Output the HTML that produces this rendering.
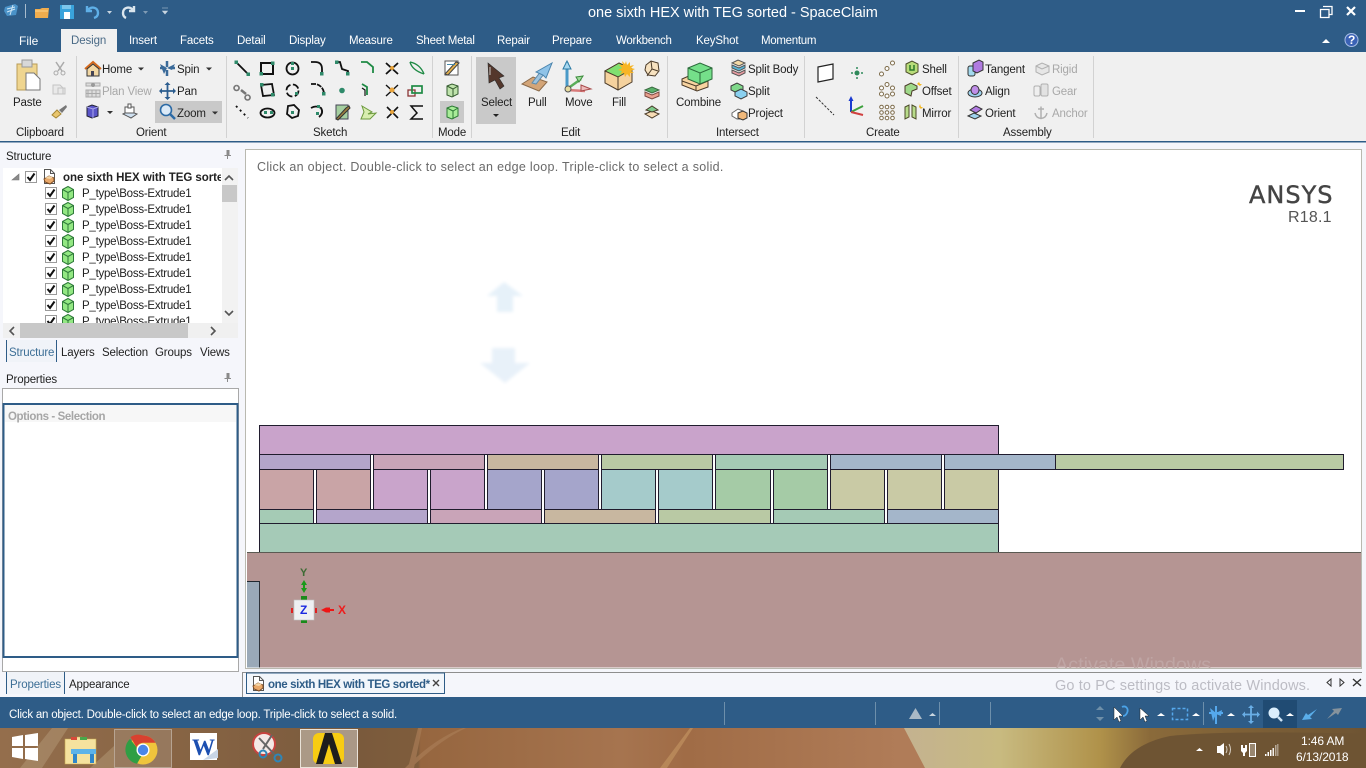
<!DOCTYPE html>
<html lang="en"><head><meta charset="utf-8"><title>one sixth HEX with TEG sorted - SpaceClaim</title>
<style>
html,body{margin:0;padding:0;width:1366px;height:768px;overflow:hidden;background:#f5f6fb}
body{position:relative;font-family:"Liberation Sans",sans-serif;font-size:11.5px;letter-spacing:-.15px;color:#222}
svg.g{position:absolute;left:0;top:0}
.t{position:absolute;white-space:nowrap;line-height:14px;height:14px}
.w{color:#fff}.d{color:#a8a8a8}
.b{font-weight:bold;letter-spacing:-.3px}
.p{letter-spacing:-.25px}
</style></head><body>
<svg class="g" width="1366" height="768" viewBox="0 0 1366 768" xmlns="http://www.w3.org/2000/svg">
<defs>
<linearGradient id="wall" x1="0" x2="1366" y1="0" y2="0" gradientUnits="userSpaceOnUse">
<stop offset="0" stop-color="#946e4c"/><stop offset=".263" stop-color="#7a5a3c"/><stop offset=".306" stop-color="#7f5d3c"/><stop offset=".308" stop-color="#96663f"/><stop offset=".455" stop-color="#a6744f"/><stop offset=".503" stop-color="#a06c46"/><stop offset=".659" stop-color="#b07c58"/><stop offset=".662" stop-color="#c4b290"/><stop offset=".732" stop-color="#c8ba80"/><stop offset=".805" stop-color="#b0924a"/><stop offset=".842" stop-color="#8a6a3a"/><stop offset="1" stop-color="#6e5433"/>
</linearGradient>
<filter id="bl"><feGaussianBlur stdDeviation="1.6"/></filter>
<g id="cb"><rect x=".5" y=".5" width="11" height="11" fill="#fff" stroke="#9a9a9a"/><path d="M2.500 6l2.500 3 4.500-6.500" fill="none" stroke="#111" stroke-width="2"/></g>
<g id="cu"><path d="M1.500 3.500l5.500-3 5.500 3v8l-5.500 3-5.500-3z" fill="#93e883" stroke="#2f7a3a"/><path d="M1.500 3.500l5.500 3 5.500-3M7 6.500v8" fill="none" stroke="#2f7a3a"/></g>
<g id="doc"><path d="M2.500 .5h6l4 4v10h-10z" fill="#fff" stroke="#555"/><path d="M8.500 .5v4h4" fill="none" stroke="#555"/><path d="M2 10l5-3 5 2v3l-4 3-5-2z" fill="#e9a96b" stroke="#7a4a22"/><path d="M3 9l4-2 4 1-3 2z" fill="#f5d7a8"/></g>
</defs>

<!-- top chrome -->
<rect width="1366" height="52" fill="#2e5c87"/>
<rect x="61" y="29" width="56" height="24" fill="#f0f0f0"/>
<rect y="52" width="1366" height="90" fill="#f0f0f0"/>
<rect y="141" width="1366" height="1.5" fill="#2e5c87"/>

<!-- QAT -->
<path d="M5 7l10-3 3 2-2 9-9 1-3-5z" fill="#4a92c8"/><path d="M7 9l8-2M7 12l8-3M10 15l3-10" stroke="#cfe6f5" fill="none"/>
<rect x="25" y="4" width="1" height="14" fill="#a8bccd"/>
<path d="M35 9h5l2-1h7l-1 10H35z" fill="#f0ad4e"/><path d="M35 11h13" stroke="#ffd58c"/>
<rect x="60" y="5" width="14" height="14" fill="#39a3dc"/><rect x="64" y="12" width="6" height="7" fill="#fff"/><rect x="62" y="5" width="9" height="4" fill="#7cc6ec"/>
<path d="M87 6v5h5M88 10c3-4 10-3 10 3 0 2-1 4-4 5" fill="none" stroke="#5fb0e8" stroke-width="2.400"/>
<path d="M107 11h5l-2.500 3z" fill="#c8d5e0"/>
<path d="M134 6v5h-5M133 10c-3-4-10-3-10 3 0 2 1 4 3 5" fill="none" stroke="#dbe6ee" stroke-width="2.400"/>
<path d="M143 11h5l-2.500 3z" fill="#7f9bb4"/>
<path d="M162 8h6M162.500 11h5l-2.500 3z" fill="#c8d5e0" stroke="#c8d5e0" stroke-width=".6"/>

<!-- win controls -->
<rect x="1295" y="10" width="10" height="2" fill="#fff"/>
<path d="M1323 6.500h9v8h-3M1320.500 9.500h8.500v8h-8.500z" fill="none" stroke="#fff" stroke-width="1.300"/>
<path d="M1347 7l8 8M1355 7l-8 8" stroke="#fff" stroke-width="2.200"/>
<path d="M1322 43l4-4 4 4z" fill="#fff"/>
<circle cx="1351.500" cy="40" r="6.500" fill="#3b62b5" stroke="#a9bfe6"/>

<!-- ribbon separators -->
<g fill="#d2d2d2"><rect x="76" y="56" width="1" height="82"/><rect x="226" y="56" width="1" height="82"/><rect x="432" y="56" width="1" height="82"/><rect x="471" y="56" width="1" height="82"/><rect x="667" y="56" width="1" height="82"/><rect x="804" y="56" width="1" height="82"/><rect x="958" y="56" width="1" height="82"/><rect x="1093" y="56" width="1" height="82"/></g>

<!-- clipboard -->
<path d="M17 64h20v26H17z" fill="#efd58f" stroke="#b89b57"/><rect x="22" y="60" width="10" height="7" fill="#d8d8d8" stroke="#999"/>
<path d="M26 73h8l6 6v11H26z" fill="#fff" stroke="#777"/>
<path d="M56 62l6 9M64 62l-6 9" stroke="#aaa" stroke-width="1.500" fill="none"/><circle cx="56" cy="73" r="2" fill="none" stroke="#aaa"/><circle cx="63" cy="73" r="2" fill="none" stroke="#aaa"/>
<path d="M53 85h7l3 3v6H53zM58 88h7v6h-7z" fill="#e9e9e9" stroke="#c4c4c4"/>
<path d="M52 115l5-5 4 4-5 4z" fill="#e9c66e" stroke="#a58634"/><path d="M59 110l7-5 1 2-5 6z" fill="#777"/>

<!-- orient -->
<rect x="155" y="101" width="67" height="22" fill="#c9c9c9"/>
<path d="M85 69l8-7 8 7" fill="none" stroke="#d46a1e" stroke-width="2"/><path d="M87 69v7h12v-7l-6-5z" fill="#f1d7a4" stroke="#333"/><rect x="91" y="71" width="3" height="5" fill="#445"/>
<path d="M138 67.500h6l-3 3z M206 67.500h6l-3 3z M107 111h6l-3 3z M212 111.500h6l-3 3z" fill="#333"/>
<path d="M167 61v6M167 76v-6M160 68h5M175 68h-5" stroke="#3a6a99" stroke-width="2.500"/><path d="M160 64l7 4 8-4-3 6-5-2-3 6z" fill="#3a6a99"/>
<path d="M86 83h14v3H86zM86 90h14v7H86z" fill="#ddd" stroke="#aaa"/><path d="M88 90v7M92 90v7M96 90v7M86 93.500h14" stroke="#aaa"/><circle cx="93" cy="85" r="2" fill="#999"/>
<path d="M167.500 83v16M160 91h15" stroke="#2c5d8f" stroke-width="1.800"/><path d="M167.500 82l-3 3h6zM167.500 100l-3-3h6zM159 91l3-3v6zM176 91l-3-3v6z" fill="#2c5d8f"/>
<path d="M87 107l5-2 6 2v9l-6 2-5-2z" fill="#5a55c8" stroke="#223"/><path d="M87 107l6 2 5-2M93 109v9" stroke="#a9a6ec" fill="none"/>
<path d="M123 114l6-3 8 3-6 4z" fill="#cfe0f0" stroke="#555"/><path d="M125 107h9v6h-9z" fill="#fff" stroke="#555"/><path d="M128 104h3v4h-3z" fill="#fff" stroke="#555"/>
<circle cx="166" cy="110" r="5.500" fill="#dceaf7" stroke="#2c6aa5" stroke-width="1.600"/><path d="M170 114l5 5" stroke="#2c6aa5" stroke-width="2.500"/>

<!-- sketch -->
<g fill="none" stroke="#111" stroke-width="1.800">
<path d="M236 62l12 12"/><path d="M261 63h12v11h-12z" stroke-width="2"/><circle cx="292.500" cy="68.500" r="6"/><path d="M311 62h4q7 0 7 7v5"/><path d="M336 62h4l2 7 6 2v3"/><path d="M361 62h6l6 5v6" stroke="#1f8a45"/>
<path d="M386 63l12 11M398 63l-12 11"/><path d="M410 62q10 2 14 12M410 62q2 8 14 12" stroke="#1f8a45" stroke-width="1.400"/>
<path d="M241 90l5 4" stroke="#777" stroke-width="2.500"/><path d="M261 85l11-1 2 11-11 1z"/><circle cx="292.500" cy="90.500" r="6" stroke-dasharray="7 2.500"/><path d="M311 84h5q7 2 8 9" stroke-dasharray="5 1"/>
<path d="M362 84l5 3v8" stroke="#1f8a45"/><path d="M362 88l3 2v6" stroke-width="1.200"/>
<path d="M386 85l12 11M398 85l-12 11" stroke-width="1.400"/><rect x="408" y="90" width="7" height="6" stroke="#8a3535" stroke-width="1.300"/><rect x="412" y="86" width="10" height="7" stroke="#1f8a45" stroke-width="1.700"/>
<path d="M236 106l12 12" stroke-dasharray="2 3.500"/><ellipse cx="267.500" cy="113" rx="7" ry="4.500"/><path d="M288 106l6-1 5 5-1 6-6 2-5-4z"/><path d="M311 108q5-3 10 0 3 5-2 9"/>
<path d="M387 107l11 11M398 107l-11 11" stroke-width="1.600"/><path d="M423 106h-12l6 7-6 6h12" stroke-width="1.500"/>
</g>
<g fill="#2f8a6a"><rect x="234.500" y="60.500" width="3.500" height="3.500"/><rect x="246.500" y="72.500" width="3.500" height="3.500"/><rect x="271" y="61.500" width="3.500" height="3.500"/><rect x="259.500" y="72" width="3.500" height="3.500"/><rect x="291" y="67" width="3" height="3"/><rect x="291" y="62" width="3" height="3"/><rect x="320" y="72" width="3.500" height="3.500"/><rect x="335" y="60.500" width="3.500" height="3.500"/><rect x="346" y="72" width="3.500" height="3.500"/><rect x="260" y="83" width="3.500" height="3.500"/><rect x="271" y="93" width="3.500" height="3.500"/><rect x="295" y="92" width="3" height="3"/><rect x="322" y="92" width="3.500" height="3.500"/><circle cx="342" cy="90.500" r="2.800"/><rect x="264" y="111" width="3" height="3"/><rect x="270" y="111" width="3" height="3"/><rect x="291" y="111" width="3" height="3"/><rect x="316" y="112" width="3" height="3"/><rect x="317" y="105" width="3" height="3"/></g>
<path d="M236.500 85.500a2.500 2.500 0 1 0 .1 0M247.500 95a2.500 2.500 0 1 0 .1 0" fill="none" stroke="#777" stroke-width="1.600"/>
<path d="M336 105h12v14h-12z" fill="#a5cfa0" stroke="#445"/><path d="M336 119l10-11 3-2 1 2-3 3-9 9z" fill="#9b7e3e" stroke="#333"/>
<path d="M362 106l10 6-4 2 8-1-6 6h-9l3-7z" fill="#d8eeb0" stroke="#6c9a3e"/>
<circle cx="392" cy="68" r="2" fill="#e8a33a"/><circle cx="392" cy="90" r="2.500" fill="#e8a33a"/><circle cx="392" cy="112" r="2" fill="#e8a33a"/>

<!-- mode -->
<rect x="440" y="101" width="24" height="22" fill="#c9c9c9"/>
<path d="M445 61h13v14h-13z" fill="#fff" stroke="#555"/><path d="M445 74l11-12 3 1-11 12z" fill="#e3b04b" stroke="#444"/><path d="M447 64h8v1h-8z" fill="#48a"/>
<path d="M447 86l5-2 6 2v8l-6 3-5-2z" fill="#bfe3ac" stroke="#355c30"/><path d="M447 86l6 3 5-3M453 89v8" fill="none" stroke="#355c30"/>
<path d="M447 108l5-2 6 2v8l-6 3-5-2z" fill="#a8ec98" stroke="#2b7a34"/><path d="M447 108l6 3 5-3M453 111v8" fill="none" stroke="#2b7a34"/>

<!-- edit -->
<rect x="476" y="57" width="40" height="67" fill="#c9c9c9"/>
<path d="M488 63l16 13-5 2 5 8-4 3-5-9-6 3z" fill="#54372c" stroke="#2a2a2a" stroke-width=".6"/><path d="M490 67v8" stroke="#ccc"/>
<path d="M493 114h6l-3 3z" fill="#222"/>
<path d="M522 84l11-7 14 5-8 9z" fill="#d3a578" stroke="#8a6a4a"/><path d="M532 83l9-12 3 3-8 10z" fill="#9dc3de" stroke="#5c8bad"/><path d="M536 72l16-9-6 15-3-3z" fill="#8fc3e8" stroke="#4a84ad"/>
<path d="M567 62v26" stroke="#4a9ac8" stroke-width="3"/><path d="M567 61l-4 8h8z" fill="#a8d8f0" stroke="#2b7aa5"/><path d="M567 89l14-10" stroke="#5aae5a" stroke-width="2.500"/><path d="M583 76l-7 1 3 5z" fill="#a0dc9a" stroke="#3a8a3a"/><path d="M567 90l18 1" stroke="#d87a7a" stroke-width="2.500"/><path d="M591 89l-10-4v6z" fill="#eebbbb" stroke="#a84a4a"/><circle cx="568" cy="89" r="3" fill="#e8dca0" stroke="#555"/>
<path d="M605 71l14-8 13 6v13l-14 8-13-7z" fill="#f5d29e" stroke="#4a3a28"/><path d="M605 71l13 6 14-8-13-6z" fill="#80e070" stroke="#4a3a28"/><path d="M618 77v13" stroke="#4a3a28"/>
<path d="M626 61l1 4 3-3 0 4 4-1-3 3 4 1-4 2 3 2-4 0 0 4-3-3-2 3-1-4-4 1 2-3-4-1 4-2-3-3 4 0-1-4 3 3z" fill="#f7b526"/>
<path d="M646 65l5-4 7 2 1 8-4 5-7-1-3-5z" fill="#f7e2c0" stroke="#4a3a28"/><path d="M651 61l1 8 6 2M652 69l-5 7" fill="none" stroke="#4a3a28"/>
<path d="M645 90l7-3 7 3-7 3z" fill="#59b16a" stroke="#3a6a40"/><path d="M645 92v4l7 3 7-3v-4l-7 3z" fill="#e9a08e" stroke="#7a4a40"/>
<path d="M645 114l7 4 7-4-7-3z" fill="#f7dcb5" stroke="#4a3a28"/><path d="M646 110l6-4 6 4-6 2z" fill="#7dc98a" stroke="#4a3a28"/>

<!-- intersect -->
<path d="M682 79l9-4 17 6v6l-11 4-15-6z" fill="#f7d3a0" stroke="#4a3a28"/><path d="M682 81l14 5 12-5M696 86v5" fill="none" stroke="#4a3a28"/>
<path d="M688 68l12-5 12 5v11l-12 5-12-5z" fill="#75df8a" stroke="#2a6a3a"/><path d="M688 68l12 5 12-5M700 73v11" fill="none" stroke="#2a6a3a"/>
<path d="M732 63l6-3 7 3-6 3z" fill="#f4d9a6" stroke="#555"/><path d="M732 65v3l7 3 6-3v-3l-6 3z" fill="#59b5d6" stroke="#555"/><path d="M732 70v3l7 3 6-3v-3l-6 3z" fill="#e79aa0" stroke="#555"/>
<path d="M731 86l6-3 6 3v4l-6 3-6-3z" fill="#7fd88a" stroke="#3a3a3a"/><path d="M735 92l6-3 6 3v4l-6 3-6-3z" fill="#8ad0ef" stroke="#3a3a3a"/>
<path d="M732 113l6-4 5 2v8l-6 0-5-3z" fill="#fff" stroke="#666"/><path d="M738 113l5-2 4 2v5l-4 2-5-2z" fill="#f0b87a" stroke="#333"/>

<!-- create -->
<path d="M818 67l15-3v15l-15 3z" fill="#fff" stroke="#222" stroke-width="1.200"/>
<path d="M816 97l18 18" stroke="#333" stroke-dasharray="2.500 1.500"/>
<circle cx="857" cy="73" r="2.500" fill="#2f8a5a"/><path d="M857 67v2M857 77v2M851 73h2M861 73h2" stroke="#2f8a5a" stroke-width="1.500"/>
<path d="M851 112v-14" stroke="#1a3ad0" stroke-width="2"/><path d="M851 96l-2.500 5h5z" fill="#1a3ad0"/><path d="M851 112l12-6" stroke="#3ca03c" stroke-width="2"/><path d="M851 112l12 3" stroke="#d04040" stroke-width="2"/>
<g fill="#fff" stroke="#7d6b4a"><circle cx="881.500" cy="74" r="2"/><circle cx="887" cy="68.500" r="2"/><circle cx="892.500" cy="63" r="2"/><circle cx="881.500" cy="88" r="2"/><circle cx="887" cy="84.500" r="2"/><circle cx="892.500" cy="88" r="2"/><circle cx="881.500" cy="94" r="2"/><circle cx="887" cy="96" r="2"/><circle cx="892.500" cy="94" r="2"/><circle cx="881.500" cy="107" r="1.800"/><circle cx="887" cy="107" r="1.800"/><circle cx="892.500" cy="107" r="1.800"/><circle cx="881.500" cy="112.500" r="1.800"/><circle cx="887" cy="112.500" r="1.800"/><circle cx="892.500" cy="112.500" r="1.800"/><circle cx="881.500" cy="118" r="1.800"/><circle cx="887" cy="118" r="1.800"/><circle cx="892.500" cy="118" r="1.800"/></g>
<path d="M906 64l6-3 6 3v8l-6 3-6-3z" fill="#b8dc7a" stroke="#4a4a28"/><path d="M910 65v5h4v-5" fill="none" stroke="#2a7a2a" stroke-width="1.500"/>
<path d="M905 86l6-3 6 3v3l-5 2-1 5-6-3z" fill="#9fd98a" stroke="#4a3a28"/><path d="M917 84l2-2 1 2 2 0-2 2z" fill="#f3b822"/>
<path d="M905 107l4-2v12l-4 2zM912 105l4 2v12l-4-2z" fill="#b8dc8a" stroke="#4a4a28"/><path d="M919 107l1-3 1 3h2l-2 2z" fill="#f3b822"/>

<!-- assembly -->
<rect x="968" y="66" width="7" height="10" rx="2" fill="#a3d9ee" stroke="#333"/><path d="M973 63l6-3 4 2v8l-6 3-4-2z" fill="#b07be0" stroke="#333"/>
<ellipse cx="975" cy="93" rx="7" ry="4" fill="#9fd3ee" stroke="#333"/><ellipse cx="975" cy="90" rx="4" ry="4.500" fill="#bf8ee8" stroke="#333"/>
<path d="M968 116l6-3 7 3-6 3z" fill="#9fd3ee" stroke="#333"/><path d="M970 110l6-4 6 3-6 4z" fill="#b07be0" stroke="#333"/>
<path d="M1036 66l6-3 7 3v6l-7 3-6-3z" fill="#e6e6e6" stroke="#b0b0b0"/><path d="M1036 66l6 3 7-3" fill="none" stroke="#b0b0b0"/>
<rect x="1034" y="86" width="6" height="10" rx="1.500" fill="#efefef" stroke="#b0b0b0"/><rect x="1041" y="84" width="7" height="12" rx="1.500" fill="#e2e2e2" stroke="#b0b0b0"/>
<path d="M1041 106.500v12M1035 113q1 5 6 5.500 5-.5 6-5.500M1038 109h6" fill="none" stroke="#b0b0b0" stroke-width="1.500"/>

<!-- left panel -->
<path d="M226.500 150h3v5h1.500v1h-3v3h-1v-3h-2.500v-1h2v-5z" fill="#8a8a8a"/>
<rect x="3" y="168" width="219" height="155" fill="#fff"/>
<rect x="222" y="168" width="16" height="155" fill="#f2f2f2"/>
<rect x="222" y="185" width="15" height="17" fill="#c8c8c8"/>
<path d="M225 180l4-4 4 4M225 311l4 4 4-4" fill="none" stroke="#555" stroke-width="1.600"/>
<rect x="3" y="323" width="235" height="15" fill="#f0f0f0"/>
<rect x="20" y="323" width="168" height="15" fill="#c8c8c8"/>
<path d="M14 327l-4 4 4 4M211 327l4 4-4 4" fill="none" stroke="#555" stroke-width="1.600"/>
<path d="M12 180l7-6v6z" fill="#8a8a8a" stroke="#777" stroke-width=".6"/>
<use href="#cb" x="25" y="171"/><use href="#doc" x="42" y="169"/>
<use href="#cb" x="45" y="187"/><use href="#cu" x="61" y="186"/>
<use href="#cb" x="45" y="203"/><use href="#cu" x="61" y="202"/>
<use href="#cb" x="45" y="219"/><use href="#cu" x="61" y="218"/>
<use href="#cb" x="45" y="235"/><use href="#cu" x="61" y="234"/>
<use href="#cb" x="45" y="251"/><use href="#cu" x="61" y="250"/>
<use href="#cb" x="45" y="267"/><use href="#cu" x="61" y="266"/>
<use href="#cb" x="45" y="283"/><use href="#cu" x="61" y="282"/>
<use href="#cb" x="45" y="299"/><use href="#cu" x="61" y="298"/>
<svg x="0" y="312" width="222" height="11" overflow="hidden" viewBox="0 312 222 11"><use href="#cb" x="45" y="315"/><use href="#cu" x="61" y="314"/></svg>
<rect x="6" y="340" width="1" height="22" fill="#2e5c87"/><rect x="56" y="340" width="1" height="22" fill="#2e5c87"/>
<rect x="7" y="340" width="49" height="22" fill="#f0f3f8"/>
<path d="M226.500 373h3v5h1.500v1h-3v3h-1v-3h-2.500v-1h2v-5z" fill="#8a8a8a"/>
<rect x="2.500" y="388.500" width="236" height="283" fill="#fff" stroke="#a8a8a8"/>
<rect x="5" y="405" width="231" height="17" fill="#f7f7f7"/>
<rect x="3.500" y="404" width="234" height="253" fill="none" stroke="#2e5c87" stroke-width="2"/>
<rect x="6" y="672" width="1" height="22" fill="#2e5c87"/><rect x="64" y="672" width="1" height="22" fill="#2e5c87"/>
<rect x="7" y="672" width="57" height="22" fill="#f0f3f8"/>

<!-- viewport -->
<rect x="245.500" y="149.500" width="1116" height="519" fill="#fff" stroke="#b9b9b0"/>
<path d="M504 282l19 14h-10v16h-16v-16h-10z" fill="#e6f1f9" filter="url(#bl)"/>
<path d="M492 348h23v15h15l-25 20-25-20h12z" fill="#e8f1f9" filter="url(#bl)"/>
<g stroke="#201c2e" stroke-width="1">
<rect x="259.500" y="425.500" width="739" height="29" fill="#c9a3cb"/>
<rect x="259.500" y="454.500" width="111" height="15" fill="#b4a5cb"/>
<rect x="373.500" y="454.500" width="111" height="15" fill="#c9a4b8"/>
<rect x="487.500" y="454.500" width="111" height="15" fill="#c8b7a0"/>
<rect x="601.500" y="454.500" width="111" height="15" fill="#b9c9a4"/>
<rect x="715.500" y="454.500" width="112" height="15" fill="#a5cab5"/>
<rect x="830.500" y="454.500" width="111" height="15" fill="#a4b6ca"/>
<rect x="944.500" y="454.500" width="111" height="15" fill="#a4b6ca"/>
<rect x="1055.500" y="454.500" width="288" height="15" fill="#b9caa4"/>
<rect x="259.500" y="469.500" width="54" height="40" fill="#c9a4a6"/>
<rect x="316.500" y="469.500" width="54" height="40" fill="#c9a4a6"/>
<rect x="373.500" y="469.500" width="54" height="40" fill="#c9a4cb"/>
<rect x="430.500" y="469.500" width="54" height="40" fill="#c9a4cb"/>
<rect x="487.500" y="469.500" width="54" height="40" fill="#a5a5cb"/>
<rect x="544.500" y="469.500" width="54" height="40" fill="#a5a5cb"/>
<rect x="601.500" y="469.500" width="54" height="40" fill="#a5cbcb"/>
<rect x="658.500" y="469.500" width="54" height="40" fill="#a5cbcb"/>
<rect x="715.500" y="469.500" width="55" height="40" fill="#a5cba6"/>
<rect x="773.500" y="469.500" width="54" height="40" fill="#a5cba6"/>
<rect x="830.500" y="469.500" width="54" height="40" fill="#c9caa5"/>
<rect x="887.500" y="469.500" width="54" height="40" fill="#c9caa5"/>
<rect x="944.500" y="469.500" width="54" height="40" fill="#c9caa5"/>
<rect x="259.500" y="509.500" width="54" height="14" fill="#a5cbb5"/>
<rect x="316.500" y="509.500" width="111" height="14" fill="#b4a5cb"/>
<rect x="430.500" y="509.500" width="111" height="14" fill="#c9a4b8"/>
<rect x="544.500" y="509.500" width="111" height="14" fill="#c8b7a0"/>
<rect x="658.500" y="509.500" width="112" height="14" fill="#b9c9a4"/>
<rect x="773.500" y="509.500" width="111" height="14" fill="#a5cab5"/>
<rect x="887.500" y="509.500" width="111" height="14" fill="#a4b6ca"/>
<rect x="259.500" y="523.500" width="739" height="29" fill="#a5cab7"/>
</g>
<rect x="247" y="552" width="1114" height="115.500" fill="#b59593"/>
<rect x="247" y="552" width="1114" height="1" fill="#5a5a52"/>
<rect x="247" y="581" width="12" height="86.500" fill="#9aa9b8"/>
<path d="M247 581.500h12.500v86" fill="none" stroke="#202830" stroke-width=".9"/>
<!-- triad -->
<path d="M304 580l-3 5h2v3h-2l3 5 3-5h-2v-3h2z" fill="#1a9a1a"/>
<rect x="301" y="596" width="6" height="4" fill="#1a8a1a"/><rect x="301" y="620" width="6" height="3" fill="#1a8a1a"/>
<rect x="291" y="608" width="2" height="5" fill="#e02020"/><rect x="315" y="608" width="2" height="5" fill="#e02020"/>
<rect x="294" y="600" width="20" height="20" fill="#eef0f2" stroke="#c0c0c0" stroke-width=".6"/>
<path d="M321 610l5-2.500h4v1.500h4v2h-4v1.500h-4z" fill="#ee1515"/>

<!-- doc tab & bottom -->
<path d="M242.500 697v-24.500H1362" fill="none" stroke="#8e8e8e"/>
<rect x="246.500" y="673" width="198" height="20.500" fill="#f2f6fb" stroke="#2e5c87"/>
<use href="#doc" x="251" y="676"/>
<path d="M433 680l6 6M439 680l-6 6" stroke="#444" stroke-width="1.400"/>
<path d="M1331 679l-4 3.500 4 3.500zM1340 679l4 3.500-4 3.500z" fill="none" stroke="#333"/>
<path d="M1353 679l8 7M1361 679l-8 7" stroke="#333" stroke-width="1.400"/>

<!-- status -->
<rect y="697" width="1366" height="31" fill="#2e5c87"/>
<g fill="#6d8fab"><rect x="724" y="702" width="1" height="23"/><rect x="875" y="702" width="1" height="23"/><rect x="939" y="702" width="1" height="23"/><rect x="990" y="702" width="1" height="23"/><rect x="1203" y="702" width="1" height="23"/></g>
<path d="M909 719l6.500-11 6.500 11z" fill="#a9b9c6"/><path d="M929 716l3.500-3 3.500 3z" fill="#c9d6e0"/>
<path d="M1096 710l4-4 4 4zM1096 717l4 4 4-4z" fill="#6f8fa8"/>
<path d="M1114 707v13l3-3 2 5 2-1-2-5h4z" fill="#fff" stroke="#222" stroke-width=".5"/><path d="M1122 707c4-2 7 2 5 6-1 2-2 3-4 3" fill="none" stroke="#4aa3e8" stroke-width="1.800"/>
<path d="M1140 708v12l3-3 2 5 2-1-2-5h4z" fill="#fff" stroke="#222" stroke-width=".5"/>
<path d="M1157 716l4-3 4 3zM1192 716l4-3 4 3zM1227 716l4-3 4 3z" fill="#fff"/>
<rect x="1172.500" y="708.500" width="15" height="11" fill="none" stroke="#55a8ec" stroke-width="1.500" stroke-dasharray="3 2"/>
<path d="M1216 706v18M1209 713h14" stroke="#55a8ec" stroke-width="2"/><path d="M1210 708l6 5 6-3-1 6-5-2-3 7z" fill="#55a8ec"/>
<path d="M1251 707v15M1244 714.500h15" stroke="#69aee6" stroke-width="1.800"/><path d="M1251 705l-3 3h6zM1251 724l-3-3h6zM1242 714.500l3-3v6zM1260 714.500l-3-3v6z" fill="#69aee6"/>
<rect x="1263" y="700" width="34" height="28" fill="#204b73"/>
<circle cx="1274" cy="713" r="5.500" fill="#dbeefc"/><path d="M1278 717l4 4" stroke="#cfe4f5" stroke-width="2.500"/>
<path d="M1286 716l4-3 4 3z" fill="#fff"/>
<path d="M1302 720l4-7 2 2 9-6-7 8 2 2z" fill="#5aaeea"/>
<path d="M1342 708l-4 7-2-2-9 6 7-8-2-2z" fill="#85929c"/>

<!-- taskbar -->
<rect y="728" width="1366" height="40" fill="url(#wall)"/>
<path d="M20 768l32-40h16l-26 40zM90 768l24-22v22z" fill="#b49a78" opacity=".5"/>
<path d="M408 768l10-40h4l-8 40z M405 768q30-30 58-40h3q-26 12-55 40z" fill="#a87c55" opacity=".7"/>
<path d="M660 768l30-40h3l-26 40z" fill="#c0925f" opacity=".7"/>
<path d="M899 728h5l21 40h-26z" fill="#b07c58"/>
<path d="M1120 768q12-24 50-32 60-6 196-2v34z" fill="#6e5433"/>
<path d="M12 737l11-2v11H12zM25 735l13-2v13H25zM12 748h11v11l-11-2zM25 748h13v13l-13-2z" fill="#fff"/>
<path d="M65 739h10l2-2 5 0 2 2h12v25H65z" fill="#f5e29e" stroke="#c8a94e" stroke-width=".6"/><path d="M71 737h6v3h-6z" fill="#d84a3a"/><path d="M80 737h7v3h-7z" fill="#48a84a"/>
<rect x="71" y="749" width="25" height="5" fill="#5cb3e8"/><path d="M73 754h4v9h-4zM90 754h4v9h-4z" fill="#2f86c9"/>
<rect x="114.500" y="729.500" width="57" height="38" fill="#c9c1b8" fill-opacity=".22" stroke="#d0c7bc" stroke-opacity=".6"/>
<circle cx="143" cy="750" r="14.500" fill="#efc43c"/>
<path d="M143 735.500a14.500 14.500 0 0 1 12.600 7.300H143a7 7 0 0 0-6.500 4.500l-6-10.200a14.500 14.500 0 0 1 12.500-1.600z" fill="#d8412f"/>
<path d="M130 739a14.500 14.500 0 0 0 7 24.800l6-10.500a7 7 0 0 1-6.500-6z" fill="#2f9e44"/>
<circle cx="143" cy="750" r="6.500" fill="#fff"/><circle cx="143" cy="750" r="5.200" fill="#4a86e8"/>
<path d="M190 733h27v27h-27z" fill="#fff"/>
<path d="M203 760l15-11v9z" fill="#c9d6e6"/>
<rect x="253" y="733" width="22" height="22" rx="11" fill="#f4e9e6" stroke="#c8433f" stroke-width="2"/>
<path d="M259 738l17 18M272 735l-9 14" stroke="#666" stroke-width="2"/><circle cx="278" cy="758" r="3.500" fill="none" stroke="#2e86b8" stroke-width="2"/><circle cx="263" cy="754" r="3.500" fill="none" stroke="#2e86b8" stroke-width="2"/>
<rect x="300.500" y="729.500" width="57" height="38" fill="#c9c1b8" fill-opacity=".6" stroke="#e9e2d8"/>
<rect x="313" y="733" width="31" height="31" rx="6" fill="#f7cc13"/>
<path d="M325 733h7l10 31h-7l-6-20-6 20h-7z" fill="#1d1d1d"/>
<path d="M1196 751l3.500-3 3.500 3z" fill="#fff"/>
<path d="M1217 746h3l4-3v13l-4-3h-3z" fill="#fff"/><path d="M1226 746q2 3.500 0 7M1229 744q3 5.500 0 11" stroke="#d8d0c4" fill="none"/>
<rect x="1241" y="745" width="2" height="3" fill="#fff"/><rect x="1245" y="745" width="2" height="3" fill="#fff"/><path d="M1241 748h6v3l-2 2v3h-2v-3l-2-2z" fill="#fff"/><rect x="1249.500" y="743.500" width="6" height="13" fill="none" stroke="#fff"/><rect x="1250" y="744" width="5" height="12" fill="#fff" fill-opacity=".3"/>
<g fill="#fff"><rect x="1265" y="754" width="1.500" height="2"/><rect x="1267.500" y="752" width="1.500" height="4"/><rect x="1270" y="750" width="1.500" height="6"/><rect x="1272.500" y="748" width="1.500" height="8" opacity=".9"/><rect x="1275" y="745" width="1.500" height="11" opacity=".5"/><rect x="1277" y="744" width="1.500" height="12" opacity=".4"/></g>
</svg>

<span class="t w" style="left:588px;top:5px;font-size:14.5px;line-height:16px;letter-spacing:-.02px">one sixth HEX with TEG sorted - SpaceClaim</span>
<span class="t w" style="left:19px;top:34px;font-size:12px;letter-spacing:0">File</span>
<span class="t" style="left:71px;top:34px;color:#4a6a86;letter-spacing:-.1px">Design</span>
<span class="t w" style="left:129px;top:34px">Insert</span>
<span class="t w" style="left:180px;top:34px">Facets</span>
<span class="t w" style="left:237px;top:34px">Detail</span>
<span class="t w" style="left:289px;top:34px">Display</span>
<span class="t w" style="left:349px;top:34px">Measure</span>
<span class="t w" style="left:416px;top:34px;letter-spacing:-.25px">Sheet Metal</span>
<span class="t w" style="left:497px;top:34px">Repair</span>
<span class="t w" style="left:552px;top:34px">Prepare</span>
<span class="t w" style="left:616px;top:34px;letter-spacing:-.25px">Workbench</span>
<span class="t w" style="left:696px;top:34px">KeyShot</span>
<span class="t w" style="left:761px;top:34px;letter-spacing:-.3px">Momentum</span>
<span class="t w" style="left:1348px;top:33px;font-weight:bold;font-size:12px">?</span>

<span class="t" style="left:13px;top:96px">Paste</span>
<span class="t" style="left:102px;top:63px">Home</span>
<span class="t" style="left:177px;top:63px">Spin</span>
<span class="t d" style="left:102px;top:85px">Plan View</span>
<span class="t" style="left:177px;top:85px">Pan</span>
<span class="t" style="left:177px;top:107px">Zoom</span>
<span class="t" style="left:481px;top:96px">Select</span>
<span class="t" style="left:528px;top:96px">Pull</span>
<span class="t" style="left:565px;top:96px">Move</span>
<span class="t" style="left:612px;top:96px">Fill</span>
<span class="t" style="left:676px;top:96px">Combine</span>
<span class="t" style="left:748px;top:63px">Split Body</span>
<span class="t" style="left:748px;top:85px">Split</span>
<span class="t" style="left:748px;top:107px">Project</span>
<span class="t" style="left:922px;top:63px">Shell</span>
<span class="t" style="left:922px;top:85px">Offset</span>
<span class="t" style="left:922px;top:107px">Mirror</span>
<span class="t" style="left:985px;top:63px">Tangent</span>
<span class="t" style="left:985px;top:85px">Align</span>
<span class="t" style="left:985px;top:107px">Orient</span>
<span class="t d" style="left:1052px;top:63px">Rigid</span>
<span class="t d" style="left:1052px;top:85px">Gear</span>
<span class="t d" style="left:1052px;top:107px">Anchor</span>
<span class="t" style="left:16px;top:126px">Clipboard</span>
<span class="t" style="left:136px;top:126px">Orient</span>
<span class="t" style="left:313px;top:126px">Sketch</span>
<span class="t" style="left:438px;top:126px">Mode</span>
<span class="t" style="left:561px;top:126px">Edit</span>
<span class="t" style="left:716px;top:126px">Intersect</span>
<span class="t" style="left:866px;top:126px">Create</span>
<span class="t" style="left:1003px;top:126px">Assembly</span>

<span class="t" style="left:6px;top:150px">Structure</span>
<span class="t b" style="left:63px;top:171px;width:158px;overflow:hidden;letter-spacing:-.05px">one sixth HEX with TEG sorted</span>
<span class="t p" style="left:82px;top:187px">P_type\Boss-Extrude1</span>
<span class="t p" style="left:82px;top:203px">P_type\Boss-Extrude1</span>
<span class="t p" style="left:82px;top:219px">P_type\Boss-Extrude1</span>
<span class="t p" style="left:82px;top:235px">P_type\Boss-Extrude1</span>
<span class="t p" style="left:82px;top:251px">P_type\Boss-Extrude1</span>
<span class="t p" style="left:82px;top:267px">P_type\Boss-Extrude1</span>
<span class="t p" style="left:82px;top:283px">P_type\Boss-Extrude1</span>
<span class="t p" style="left:82px;top:299px">P_type\Boss-Extrude1</span>
<span class="t p" style="left:82px;top:315px;height:8px;overflow:hidden">P_type\Boss-Extrude1</span>
<span class="t" style="left:9px;top:346px;color:#3d6f96">Structure</span>
<span class="t" style="left:61px;top:346px">Layers</span>
<span class="t" style="left:102px;top:346px">Selection</span>
<span class="t" style="left:155px;top:346px">Groups</span>
<span class="t" style="left:200px;top:346px">Views</span>
<span class="t" style="left:6px;top:373px">Properties</span>
<span class="t b" style="left:8px;top:410px;color:#a6a6a6;letter-spacing:-.4px">Options - Selection</span>
<span class="t" style="left:10px;top:678px;color:#3d6f96">Properties</span>
<span class="t" style="left:69px;top:678px">Appearance</span>
<span class="t b" style="left:268px;top:678px;color:#2e5c87;letter-spacing:-.38px">one sixth HEX with TEG sorted*</span>

<span class="t" style="left:257px;top:160px;font-size:12.5px;color:#6a6a6a;letter-spacing:.3px">Click an object. Double-click to select an edge loop. Triple-click to select a solid.</span>
<span class="t" style="left:1249px;top:181px;height:28px;line-height:28px;font-size:24px;letter-spacing:1px;color:#444;-webkit-text-stroke:.4px #444;font-family:'DejaVu Sans','Liberation Sans',sans-serif">ANSYS</span>
<span class="t" style="left:1288px;top:209px;height:18px;line-height:18px;font-size:16px;letter-spacing:.2px;color:#555">R18.1</span>
<span class="t" style="left:300px;top:566px;font-size:11px;font-weight:bold;color:#3d6b34;letter-spacing:0">Y</span>
<span class="t" style="left:300px;top:603px;font-size:12px;font-weight:bold;color:#1a28e0;letter-spacing:0">Z</span>
<span class="t" style="left:338px;top:603px;font-size:12px;font-weight:bold;color:#ee1c1c;letter-spacing:0">X</span>
<span class="t" style="left:1055px;top:655px;height:13px;line-height:20px;font-size:19.800px;color:#bfa5a4;overflow:hidden;letter-spacing:0">Activate Windows</span>
<span class="t" style="left:1055px;top:679px;font-size:14.5px;color:#bcbcc4;letter-spacing:.12px">Go to PC settings to activate Windows.</span>

<span class="t w" style="left:9px;top:708px;letter-spacing:-.21px">Click an object. Double-click to select an edge loop. Triple-click to select a solid.</span>
<span class="t" style="left:192px;top:740px;font-family:'Liberation Serif',serif;font-weight:bold;font-size:23px;line-height:16px;color:#1c4fb0;letter-spacing:0">W</span>
<span class="t w" style="left:1301px;top:734px;font-size:12px;letter-spacing:-.1px">1:46 AM</span>
<span class="t w" style="left:1296px;top:750px;font-size:12px;letter-spacing:-.1px">6/13/2018</span>
</body></html>
